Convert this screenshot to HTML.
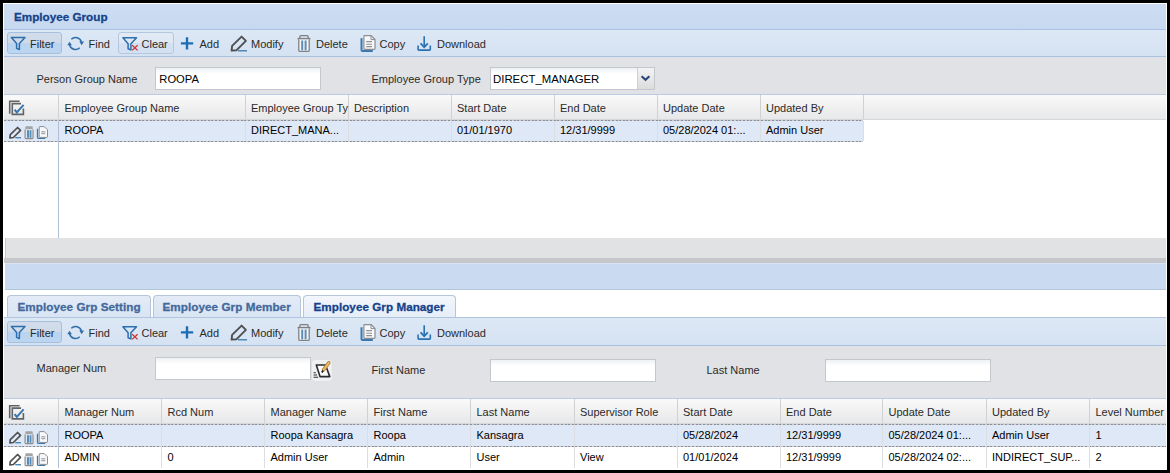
<!DOCTYPE html>
<html><head><meta charset="utf-8">
<style>
*{box-sizing:border-box;margin:0;padding:0}
html,body{width:1170px;height:473px;overflow:hidden;background:#000}
body{position:relative;font-family:"Liberation Sans",sans-serif;font-size:11px;color:#000}
.a{position:absolute}
.t{position:absolute;white-space:nowrap;font-size:11px;line-height:13px;color:#2a2a2a}
.b{font-weight:bold;font-size:11.7px;-webkit-text-stroke:0.3px}
#frame{left:3px;top:3px;width:1164px;height:467px;background:#fff}
.hdr{background:linear-gradient(#cddcf1,#c7d9f0)}
.tb{background:linear-gradient(#dde8f5,#d5e2f2)}
.form{background:#e1e2e5}
.gh{background:linear-gradient(#fafafa,#f0f0f1 50%,#e6e7e8)}
.sel{background:#dfe8f6}
.vl{position:absolute;width:1px;background:#d0d1d3}
.dash{position:absolute;height:1px;background:repeating-linear-gradient(90deg,#8c9096 0 2px,#c8ccd2 2px 3.64px)}
.inp{position:absolute;background:linear-gradient(#eef1f4,#fff 6px);border:1px solid #c4c7cc}
.btn{position:absolute;border:1px solid #a6bfdc;border-radius:3px}
</style></head>
<body>
<div id="frame" class="a"></div>

<!-- ============ TOP PANEL ============ -->
<div class="a hdr" style="left:4px;top:4px;width:1162px;height:25px"></div>
<div class="a" style="left:4px;top:29px;width:1162px;height:1px;background:#a9c2e2"></div>
<div class="t b" style="left:14px;top:10px;color:#15428b">Employee Group</div>

<div class="a tb" style="left:4px;top:30px;width:1162px;height:26px"></div>
<div class="a" style="left:4px;top:56px;width:1162px;height:1px;background:#a9c2e2"></div>

<!-- toolbar 1 -->
<div id="tb1">
<div class="btn" style="left:7px;top:32px;width:55px;height:22px;background:linear-gradient(#d2dcea 0,#cfdbe9 50%,#b9d4f0 52%,#bcd6f1)"></div>
<div class="btn" style="left:118px;top:32px;width:56px;height:22px;background:linear-gradient(#e2eaf4 0,#dfe8f3 50%,#d2e0f1 52%,#d4e1f2);border-color:#b4c7de"></div>
<div class="t" style="left:30px;top:37.7px">Filter</div>
<div class="t" style="left:88.5px;top:37.7px">Find</div>
<div class="t" style="left:141.5px;top:37.7px">Clear</div>
<div class="t" style="left:199.5px;top:37.7px">Add</div>
<div class="t" style="left:251px;top:37.7px">Modify</div>
<div class="t" style="left:316px;top:37.7px">Delete</div>
<div class="t" style="left:379.5px;top:37.7px">Copy</div>
<div class="t" style="left:437px;top:37.7px">Download</div>
</div>

<!-- form 1 -->
<div class="a form" style="left:4px;top:57px;width:1162px;height:37px"></div>
<div class="a" style="left:4px;top:94px;width:1162px;height:1px;background:#b9cbe2"></div>
<div class="t" style="left:36.5px;top:72.7px">Person Group Name</div>
<div class="inp" style="left:155px;top:67px;width:166px;height:23px"></div>
<div class="t" style="left:159.3px;top:73.1px;color:#000;font-size:11.2px">ROOPA</div>
<div class="t" style="left:371.5px;top:72.7px">Employee Group Type</div>
<div class="inp" style="left:490px;top:67px;width:165px;height:23px"></div>
<div class="a" style="left:637px;top:68px;width:17px;height:21px;background:linear-gradient(#f3f3f3,#dcdcdc);border-left:1px solid #d0d0d0"></div>
<div class="t" style="left:493px;top:73.1px;color:#000;font-size:11.4px">DIRECT_MANAGER</div>

<!-- grid 1 header -->
<div class="a gh" style="left:4px;top:95px;width:1162px;height:25px"></div>
<div class="vl" style="left:58px;top:95px;height:25px"></div>
<div class="vl" style="left:245px;top:95px;height:25px"></div>
<div class="vl" style="left:348px;top:95px;height:25px"></div>
<div class="vl" style="left:451px;top:95px;height:25px"></div>
<div class="vl" style="left:554px;top:95px;height:25px"></div>
<div class="vl" style="left:657px;top:95px;height:25px"></div>
<div class="vl" style="left:760px;top:95px;height:25px"></div>
<div class="vl" style="left:863px;top:95px;height:25px"></div>
<div class="t" style="left:64.5px;top:101.6px">Employee Group Name</div>
<div class="t" style="left:251px;top:101.6px">Employee Group Ty</div>
<div class="t" style="left:354px;top:101.6px">Description</div>
<div class="t" style="left:457px;top:101.6px">Start Date</div>
<div class="t" style="left:560px;top:101.6px">End Date</div>
<div class="t" style="left:663px;top:101.6px">Update Date</div>
<div class="t" style="left:766px;top:101.6px">Updated By</div>

<div class="a" style="left:4px;top:119px;width:1162px;height:1px;background:#d6d7d9"></div>
<!-- grid 1 row -->
<div class="a sel" style="left:4px;top:120px;width:859px;height:21px"></div>
<div class="dash" style="left:4px;top:120px;width:859px"></div>
<div class="dash" style="left:4px;top:141px;width:859px"></div>
<div class="vl" style="left:58px;top:121px;height:117px;background:#afc0d6"></div>
<div class="vl" style="left:245px;top:121px;height:20px;background:#dcdde0"></div>
<div class="vl" style="left:348px;top:121px;height:20px;background:#dcdde0"></div>
<div class="vl" style="left:451px;top:121px;height:20px;background:#dcdde0"></div>
<div class="vl" style="left:554px;top:121px;height:20px;background:#dcdde0"></div>
<div class="vl" style="left:657px;top:121px;height:20px;background:#dcdde0"></div>
<div class="vl" style="left:760px;top:121px;height:20px;background:#dcdde0"></div>
<div class="vl" style="left:863px;top:121px;height:20px;background:#dcdde0"></div>
<div class="t" style="left:64.5px;top:124px;color:#000">ROOPA</div>
<div class="t" style="left:251px;top:124px;color:#000">DIRECT_MANA...</div>
<div class="t" style="left:457px;top:124px;color:#000">01/01/1970</div>
<div class="t" style="left:560px;top:124px;color:#000">12/31/9999</div>
<div class="t" style="left:663px;top:124px;color:#000">05/28/2024 01:...</div>
<div class="t" style="left:766px;top:124px;color:#000">Admin User</div>

<!-- bottom bar of grid 1 -->
<div class="a" style="left:5px;top:238px;width:1161px;height:20px;background:#e1e2e4;border-left:1px solid #b8c8de"></div>
<div class="a" style="left:4px;top:258px;width:1162px;height:5px;background:#c5c7ca"></div>
<div class="a" style="left:5px;top:263px;width:1161px;height:27px;background:#cadbf1"></div>
<div class="a" style="left:5px;top:263px;width:1161px;height:1px;background:#d9e5f4"></div>
<div class="a" style="left:5px;top:289px;width:1161px;height:1px;background:#b3c5da"></div>

<!-- ============ TABS ============ -->
<div class="a" style="left:4px;top:317px;width:1162px;height:1px;background:#b0c4dc"></div>
<div class="a" style="left:7px;top:295px;width:144px;height:22px;border:1px solid #b4c6dc;border-bottom:none;border-radius:4px 4px 0 0;background:linear-gradient(#e3ebf6,#d9e5f4)"></div>
<div class="a" style="left:153px;top:295px;width:148px;height:22px;border:1px solid #b4c6dc;border-bottom:none;border-radius:4px 4px 0 0;background:linear-gradient(#e3ebf6,#d9e5f4)"></div>
<div class="a" style="left:303px;top:295px;width:153px;height:22px;border:1px solid #b4c6dc;border-bottom:none;border-radius:4px 4px 0 0;background:linear-gradient(#f3f6fb,#e6eef8)"></div>
<div class="t b" style="left:17.5px;top:300.3px;color:#44699c;letter-spacing:0.05px">Employee Grp Setting</div>
<div class="t b" style="left:162.5px;top:300.3px;color:#44699c;letter-spacing:0.05px">Employee Grp Member</div>
<div class="t b" style="left:313.5px;top:300.3px;color:#15428b;letter-spacing:0.03px">Employee Grp Manager</div>

<!-- toolbar 2 -->
<div class="a tb" style="left:4px;top:318px;width:1162px;height:27px"></div>
<div class="a" style="left:4px;top:345px;width:1162px;height:1px;background:#a9c2e2"></div>
<div id="tb2">
<div class="btn" style="left:7px;top:320.5px;width:55px;height:22px;background:linear-gradient(#d2dcea 0,#cfdbe9 50%,#b9d4f0 52%,#bcd6f1)"></div>
<div class="t" style="left:30px;top:326.7px">Filter</div>
<div class="t" style="left:88.5px;top:326.7px">Find</div>
<div class="t" style="left:141.5px;top:326.7px">Clear</div>
<div class="t" style="left:199.5px;top:326.7px">Add</div>
<div class="t" style="left:251px;top:326.7px">Modify</div>
<div class="t" style="left:316px;top:326.7px">Delete</div>
<div class="t" style="left:379.5px;top:326.7px">Copy</div>
<div class="t" style="left:437px;top:326.7px">Download</div>
</div>

<!-- form 2 -->
<div class="a form" style="left:4px;top:346px;width:1162px;height:53px"></div>
<div class="a" style="left:4px;top:398px;width:1162px;height:1px;background:#b9cbe2"></div>
<div class="t" style="left:36.5px;top:362.2px">Manager Num</div>
<div class="inp" style="left:155px;top:357px;width:156px;height:23px"></div>
<div class="a" style="left:312px;top:360px;width:20px;height:21px;border-radius:3px;background:#eef0f2;box-shadow:0 0 1px #d0d2d6"></div>
<div class="t" style="left:371.5px;top:364.3px">First Name</div>
<div class="inp" style="left:490px;top:359px;width:166px;height:23px"></div>
<div class="t" style="left:706.5px;top:364.3px">Last Name</div>
<div class="inp" style="left:825px;top:359px;width:166px;height:23px"></div>

<!-- grid 2 header -->
<div class="a gh" style="left:4px;top:399px;width:1162px;height:25px"></div>
<div class="vl" style="left:58px;top:399px;height:25px"></div>
<div class="vl" style="left:161px;top:399px;height:25px"></div>
<div class="vl" style="left:264px;top:399px;height:25px"></div>
<div class="vl" style="left:367px;top:399px;height:25px"></div>
<div class="vl" style="left:470px;top:399px;height:25px"></div>
<div class="vl" style="left:574px;top:399px;height:25px"></div>
<div class="vl" style="left:677px;top:399px;height:25px"></div>
<div class="vl" style="left:780px;top:399px;height:25px"></div>
<div class="vl" style="left:882px;top:399px;height:25px"></div>
<div class="vl" style="left:986px;top:399px;height:25px"></div>
<div class="vl" style="left:1089px;top:399px;height:25px"></div>
<div class="t" style="left:64.5px;top:406.4px">Manager Num</div>
<div class="t" style="left:167.5px;top:406.4px">Rcd Num</div>
<div class="t" style="left:270.5px;top:406.4px">Manager Name</div>
<div class="t" style="left:373.5px;top:406.4px">First Name</div>
<div class="t" style="left:476.5px;top:406.4px">Last Name</div>
<div class="t" style="left:580px;top:406.4px">Supervisor Role</div>
<div class="t" style="left:683px;top:406.4px">Start Date</div>
<div class="t" style="left:786px;top:406.4px">End Date</div>
<div class="t" style="left:888.5px;top:406.4px">Update Date</div>
<div class="t" style="left:992px;top:406.4px">Updated By</div>
<div class="t" style="left:1095.5px;top:406.4px">Level Number</div>

<div class="a" style="left:4px;top:423px;width:1162px;height:1px;background:#d6d7d9"></div>
<!-- grid 2 rows -->
<div class="a sel" style="left:4px;top:424px;width:1162px;height:22px"></div>
<div class="dash" style="left:4px;top:424px;width:1162px"></div>
<div class="dash" style="left:4px;top:446px;width:1162px"></div>
<div class="vl" style="left:58px;top:425px;height:43px;background:#afc0d6"></div>
<div class="vl" style="left:161px;top:425px;height:43px;background:#dcdde0"></div>
<div class="vl" style="left:264px;top:425px;height:43px;background:#dcdde0"></div>
<div class="vl" style="left:367px;top:425px;height:43px;background:#dcdde0"></div>
<div class="vl" style="left:470px;top:425px;height:43px;background:#dcdde0"></div>
<div class="vl" style="left:574px;top:425px;height:43px;background:#dcdde0"></div>
<div class="vl" style="left:677px;top:425px;height:43px;background:#dcdde0"></div>
<div class="vl" style="left:780px;top:425px;height:43px;background:#dcdde0"></div>
<div class="vl" style="left:882px;top:425px;height:43px;background:#dcdde0"></div>
<div class="vl" style="left:986px;top:425px;height:43px;background:#dcdde0"></div>
<div class="vl" style="left:1089px;top:425px;height:43px;background:#dcdde0"></div>
<div class="t" style="left:64.5px;top:428.5px;color:#000">ROOPA</div>
<div class="t" style="left:270.5px;top:428.5px;color:#000">Roopa Kansagra</div>
<div class="t" style="left:373.5px;top:428.5px;color:#000">Roopa</div>
<div class="t" style="left:476.5px;top:428.5px;color:#000">Kansagra</div>
<div class="t" style="left:683px;top:428.5px;color:#000">05/28/2024</div>
<div class="t" style="left:786px;top:428.5px;color:#000">12/31/9999</div>
<div class="t" style="left:888.5px;top:428.5px;color:#000">05/28/2024 01:...</div>
<div class="t" style="left:992px;top:428.5px;color:#000">Admin User</div>
<div class="t" style="left:1095.5px;top:428.5px;color:#000">1</div>

<div class="t" style="left:64.5px;top:451.3px;color:#000">ADMIN</div>
<div class="t" style="left:167.5px;top:451.3px;color:#000">0</div>
<div class="t" style="left:270.5px;top:451.3px;color:#000">Admin User</div>
<div class="t" style="left:373.5px;top:451.3px;color:#000">Admin</div>
<div class="t" style="left:476.5px;top:451.3px;color:#000">User</div>
<div class="t" style="left:580px;top:451.3px;color:#000">View</div>
<div class="t" style="left:683px;top:451.3px;color:#000">01/01/2024</div>
<div class="t" style="left:786px;top:451.3px;color:#000">12/31/9999</div>
<div class="t" style="left:888.5px;top:451.3px;color:#000">05/28/2024 02:...</div>
<div class="t" style="left:992px;top:451.3px;color:#000">INDIRECT_SUP...</div>
<div class="t" style="left:1095.5px;top:451.3px;color:#000">2</div>


<svg class="a" style="left:0;top:0" width="1170" height="473" viewBox="0 0 1170 473">
<defs>
<g id="tbi">
  <!-- filter funnel -->
  <path d="M11.4,37.4 H25 L19.4,43.4 V49.6 L16.6,48.4 V43.4 Z" fill="none" stroke="#2c6fae" stroke-width="1.5" stroke-linejoin="round"/>
  <!-- find -->
  <path d="M71.3,39.3 A6,6 0 0 1 81.4,42" fill="none" stroke="#2f6ea8" stroke-width="1.5"/>
  <path d="M79.3,41.6 L84,41.6 L81.7,45.2 Z" fill="#2f6ea8"/>
  <path d="M79.7,47.7 A6,6 0 0 1 69.6,45" fill="none" stroke="#2f6ea8" stroke-width="1.5"/>
  <path d="M67.2,45.3 L71.9,45.3 L69.6,41.7 Z" fill="#2f6ea8"/>
  <!-- add -->
  <path d="M187,37.2 V49.6 M180.9,43.4 H193.2" stroke="#1f6db4" stroke-width="2.4"/>
  <!-- modify -->
  <path d="M241.6,36.6 L245.9,40.9 L236.6,50.2 L231.6,50.6 L232.1,45.9 Z" fill="none" stroke="#4f5052" stroke-width="1.9" stroke-linejoin="round"/>
  <rect x="238" y="50" width="9" height="1.5" fill="#4e88b4"/>
  <!-- delete -->
  <path d="M299.8,38.2 V36.8 Q299.8,35.6 301,35.6 H307 Q308.2,35.6 308.2,36.8 V38.2" fill="none" stroke="#7d7f82" stroke-width="1.3"/>
  <rect x="297.6" y="37.9" width="12.8" height="1.6" fill="#7d7f82"/>
  <path d="M298.8,39.5 V50.4 Q298.8,51.4 299.8,51.4 H308.2 Q309.2,51.4 309.2,50.4 V39.5" fill="#f4f6f8" stroke="#808285" stroke-width="1.3"/>
  <rect x="301.2" y="40.5" width="2" height="9.8" fill="#5d8fb6"/>
  <rect x="304.6" y="40.5" width="2" height="9.8" fill="#5d8fb6"/>
  <!-- copy -->
  <path d="M361.5,38.2 V50 Q361.5,51 362.5,51 H372.8" fill="none" stroke="#3d79ae" stroke-width="2"/>
  <path d="M363.9,36.4 Q363.9,35.7 364.6,35.7 H371.2 L375,39.5 V48.6 Q375,49.4 374.2,49.4 H364.7 Q363.9,49.4 363.9,48.6 Z" fill="#f7f8fa" stroke="#8b8d90" stroke-width="1.2"/>
  <path d="M371,35.8 V39.6 H374.9" fill="none" stroke="#8b8d90" stroke-width="1"/>
  <path d="M366.2,41.6 H372 M366.2,44.2 H372 M366.2,46.6 H372" stroke="#8f9194" stroke-width="1.1"/>
  <!-- download -->
  <path d="M424.2,36.2 V47" stroke="#2a71b2" stroke-width="1.6"/>
  <path d="M420.6,43.4 L424.2,47.1 L427.8,43.4" fill="none" stroke="#2a71b2" stroke-width="1.8"/>
  <path d="M418.1,45.5 V49.3 Q418.1,50.1 418.9,50.1 H429.5 Q430.3,50.1 430.3,49.3 V45.5" fill="none" stroke="#2a71b2" stroke-width="1.6"/>
</g>
<g id="rowi">
  <path d="M17.6,127.5 L20.5,130.4 L13.4,137.5 L9.9,137.9 L10.3,134.7 Z" fill="none" stroke="#4f5052" stroke-width="1.7" stroke-linejoin="round"/>
  <rect x="15.3" y="137" width="5.7" height="1.4" fill="#4e88b4"/>
  <path d="M25.3,129.6 V127.4 Q25.3,126.3 26.4,126.3 H31.7 Q32.8,126.3 32.8,127.4 V129.6 Z" fill="#a2a4a7"/>
  <path d="M25.1,129.4 V137.8 Q25.1,138.6 25.9,138.6 H32.2 Q33,138.6 33,137.8 V129.4" fill="#eef2f5" stroke="#8a8c8f" stroke-width="1.2"/>
  <rect x="26.9" y="130.2" width="2.2" height="7.6" fill="#5a8db5"/>
  <rect x="29.6" y="130.2" width="1.9" height="7.6" fill="#5a8db5"/>
  <path d="M37.5,128.7 V137.6 Q37.5,138.4 38.3,138.4 H45.3" fill="none" stroke="#3b78ae" stroke-width="1.3"/>
  <path d="M39.2,127.1 Q39.2,126.6 39.7,126.6 H44.3 L47.5,129.8 V136.8 Q47.5,137.4 46.9,137.4 H39.8 Q39.2,137.4 39.2,136.8 Z" fill="#f7f8fa" stroke="#8b8d90" stroke-width="1"/>
  <path d="M41.3,131.8 H45.3 M41.3,133.7 H45.3" stroke="#8f9194" stroke-width="1"/>
</g>
<g id="chk">
  <path d="M19.6,101.2 H9.7 V113.8" fill="none" stroke="#616366" stroke-width="1.6"/>
  <path d="M21,103.6 H12.3 V114.4 H23.4 V108.6" fill="none" stroke="#616366" stroke-width="1.6"/>
  <path d="M14.6,109.6 L16.8,112.4 L23.6,104.8" fill="none" stroke="#3a77ae" stroke-width="2"/>
</g>
</defs>
<use href="#tbi"/>
<use href="#tbi" transform="translate(0,289)"/>
<!-- clear funnel + x (top toolbar) -->
<g>
  <path d="M122.9,37.7 H136.5 L130.9,43.7 V49.9 L128.1,48.7 V43.7 Z" fill="none" stroke="#2c6fae" stroke-width="1.5" stroke-linejoin="round"/>
  <path d="M132.2,45.2 L137.6,50.4 M137.6,45.2 L132.2,50.4" stroke="#c9302c" stroke-width="1.2"/>
</g>
<g transform="translate(0,289)">
  <path d="M122.9,37.7 H136.5 L130.9,43.7 V49.9 L128.1,48.7 V43.7 Z" fill="none" stroke="#2c6fae" stroke-width="1.5" stroke-linejoin="round"/>
  <path d="M132.2,45.2 L137.6,50.4 M137.6,45.2 L132.2,50.4" stroke="#c9302c" stroke-width="1.2"/>
</g>
<use href="#rowi"/>
<use href="#rowi" transform="translate(0,305)"/>
<use href="#rowi" transform="translate(0,327)"/>
<use href="#chk"/>
<use href="#chk" transform="translate(0,304.5)"/>
<!-- combo chevron -->
<path d="M641.6,76.2 L645.5,79.8 L649.4,76.2" fill="none" stroke="#2b4678" stroke-width="2.2"/>
<!-- lookup icon -->
<g>
  <path d="M316.3,365 H325.5 L329.8,376.6 H320 Z" fill="#fafafa" stroke="#2b2b2b" stroke-width="1.6" stroke-linejoin="round"/>
  <path d="M328.8,362.8 L323.6,369.8" stroke="#a87a30" stroke-width="3.6" stroke-linecap="round"/>
  <path d="M328.8,362.8 L323.6,369.8" stroke="#eab865" stroke-width="2.2" stroke-linecap="round"/>
  <path d="M323.2,370.4 L321.8,372.4" stroke="#222" stroke-width="1.8"/>
  <path d="M313.6,372.8 H315.8 M313.6,375 H317 M313.6,377.2 H318.2" stroke="#2b2b2b" stroke-width="1.1"/>
</g>
</svg>

</body></html>
